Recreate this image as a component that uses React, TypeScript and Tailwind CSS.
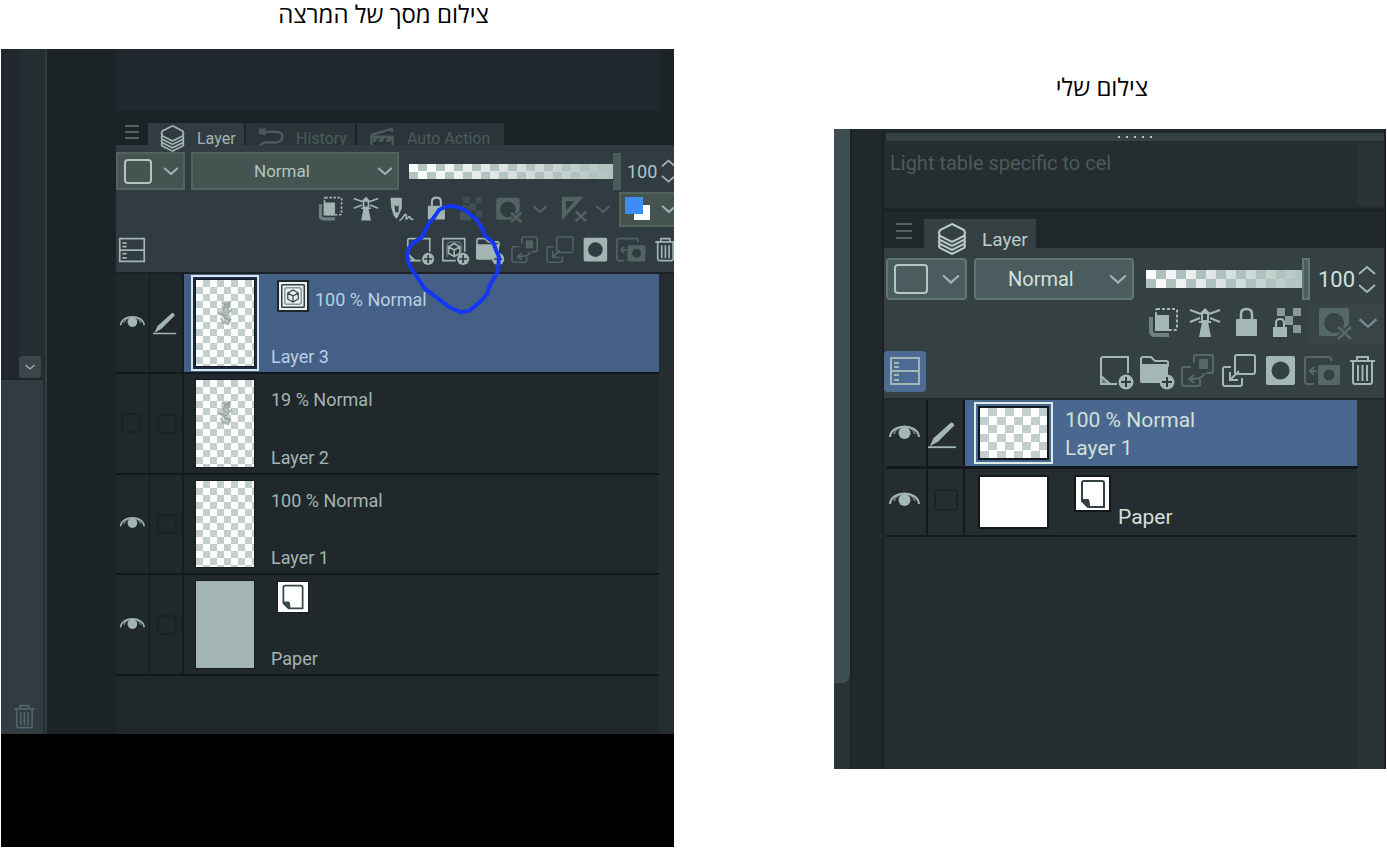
import React from "react";

type IconName =
  | "layers" | "reference" | "lighthouse" | "draft" | "lock" | "lockPixels" | "maskOff" | "rulerOff"
  | "newLayer" | "newCube" | "folder" | "transfer" | "merge" | "mask" | "applyMask" | "trash"
  | "eye" | "pen" | "history" | "clapper" | "list" | "paper" | "cube" | "chevron";

const line = { fill: "none", stroke: "currentColor", strokeWidth: 2 };

const plus = (
  <g>
    <circle cx="26" cy="27" r="7.5" fill="currentColor" />
    <path d="M21 27h10M26 22v10" stroke="#313b3e" strokeWidth="2" />
  </g>
);

const shapes: Record<IconName, React.ReactNode> = {
  layers: (
    <g {...line}>
      <path d="M16 1 L28 7 Q30 10 28 13 L16 19 L4 13 Q2 10 4 7 Z" />
      <path d="M4 12 Q2 15 4 17 L16 23 L28 17 Q30 15 28 12" />
      <path d="M4 17 Q2 19 4 21 L16 27 L28 21 Q30 19 28 17" />
      <path d="M4 21 Q2 23 4 25 L16 31 L28 25 Q30 23 28 21" />
    </g>
  ),
  reference: (
    <g>
      <path d="M3 10v14q0 4 4 4h14" fill="none" stroke="#6d8280" strokeWidth="4" />
      <rect x="7" y="8" width="14" height="16" fill="currentColor" />
      <rect x="8" y="2" width="21" height="21" rx="1" {...line} strokeDasharray="3 2" />
    </g>
  ),
  lighthouse: (
    <g>
      <path d="M1 3l11 4M31 3L20 7M1 15l10-4M31 15l-10-4" {...line} />
      <path d="M16 1l6 6H10zM13 15h6l3 15H10z" fill="currentColor" />
      <path d="M13 6v8h6V6M10 15h12" {...line} />
    </g>
  ),
  draft: (
    <g>
      <path d="M3 2h14v13l-5 11-2 2-3-4-3-10z" fill="currentColor" />
      <path d="M8 10q3 6 5 0v10H9z" fill="#313b42" />
      <path d="M14 30c4 0 6-9 8-7s-1 6 1 5 3-4 4-2 2 4 4 2" {...line} />
    </g>
  ),
  lock: (
    <g>
      <rect x="6" y="12" width="21" height="17" rx="1" fill="currentColor" />
      <path d="M11 12V7q0-5 5.500-5T22 7v5" {...line} strokeWidth="2.500" />
    </g>
  ),
  lockPixels: (
    <g>
      <g fill="currentColor" opacity="0.75">
        <path d="M6 1h8v8H6zM22 1h8v8h-8zM14 9h8v9h-8zM22 18h8v8h-8z" />
      </g>
      <rect x="2" y="20" width="14" height="10" fill="currentColor" />
      <path d="M5 20v-4q0-4 4-4t4 4v4" {...line} />
    </g>
  ),
  maskOff: (
    <g>
      <path fillRule="evenodd" d="M1 1h26q2 0 2 2v26H1q-2 0-2-2V3q0-2 2-2zM14 6a10 10 0 1 0 .1 20a10 10 0 1 0-.1-20z" fill="currentColor" />
      <path d="M18 20l13 12M31 20L18 32" stroke="#384446" strokeWidth="6" />
      <path d="M18 20l13 12M31 20L18 32" {...line} strokeWidth="3" />
    </g>
  ),
  rulerOff: (
    <g>
      <path fillRule="evenodd" d="M1 1h27L1 30zM6 6v12L17 6z" fill="currentColor" />
      <path d="M18 19l13 12M31 19L18 31" {...line} strokeWidth="3" />
    </g>
  ),
  newLayer: (
    <g>
      <path d="M28 18V2H3Q1 2 1 4v17l9 8h7M1 21v8h9" {...line} />
      <path d="M1 20l10 9H1z" fill="currentColor" opacity="0.5" />
      {plus}
    </g>
  ),
  newCube: (
    <g>
      <path d="M28 18V2H1v27h16" {...line} />
      <path d="M8 12l7-4 7 4v8l-7 4-7-4zM8 12l7 4 7-4M15 16v8" {...line} />
      <path d="M6 25V12q0-6 6-6h6q6 0 6 6v6" {...line} opacity="0.4" />
      {plus}
    </g>
  ),
  folder: (
    <g>
      <path d="M0 26V4q0-2 2-2h8l4 4h11q2 0 2 2v4" {...line} />
      <path d="M-1 9h28v14l-8 5H1q-2 0-2-2z" fill="currentColor" />
      {plus}
    </g>
  ),
  transfer: (
    <g {...line}>
      <path d="M12 8V2q0-2 2-2h15q2 0 2 2v14q0 2-2 2h-5" />
      <path d="M9 12H2q-2 0-2 2v15q0 2 2 2h14q2 0 2-2v-5" />
      <rect x="18" y="5" width="7" height="8" fill="currentColor" />
      <path d="M22 18q0 6-14 6M12 20l-5 4 5 4" />
    </g>
  ),
  merge: (
    <g {...line}>
      <rect x="12" y="0" width="20" height="19" rx="2" />
      <path d="M8 12H2q-2 0-2 2v15q0 2 2 2h15q2 0 2-2v-6" />
      <path d="M16 16L7 25M7 17v8h8" />
    </g>
  ),
  mask: (
    <path fillRule="evenodd" d="M4 1h25q2 0 2 2v25q0 2-2 2H4q-2 0-2-2V3q0-2 2-2zM16.500 6.500a9 9 0 1 0 .1 18a9 9 0 1 0-.1-18z" fill="currentColor" />
  ),
  applyMask: (
    <g>
      <path d="M26 6V4q0-2-2-2H2Q0 2 0 4v23q0 2 2 2h7" {...line} />
      <path d="M12 16H5M9 12l-4 4 4 4" {...line} />
      <path fillRule="evenodd" d="M15 10h18q2 0 2 2v16q0 2-2 2H15q-2 0-2-2V12q0-2 2-2zM24 14.500a5.500 5.500 0 1 0 .1 11a5.500 5.500 0 1 0-.1-11z" fill="currentColor" />
    </g>
  ),
  trash: (
    <g {...line}>
      <path d="M4 6h25M11 6V2h11v4M7 6v21q0 2 2 2h15q2 0 2-2V6" />
      <path d="M12 10v16M16.500 10v16M21 10v16" />
    </g>
  ),
  eye: (
    <g>
      <path d="M2 20C3 6 30 6 31 20" {...line} />
      <path d="M6 17C8 8 25 8 27 17" {...line} opacity="0.6" />
      <circle cx="16.500" cy="16" r="6" fill="currentColor" />
    </g>
  ),
  pen: (
    <g>
      <path d="M0 30h31" {...line} />
      <path d="M25 3q3-1 4 3L11 24l-9 5 4-9z" fill="currentColor" />
    </g>
  ),
  history: <path d="M5 6h18q7 0 7 6t-7 7H10q-7 0-8 7M3 1v8M9 2L3 6l6 3M2 26h24" {...line} strokeWidth="3" />,
  clapper: (
    <g>
      <path d="M2 10L29 2M3 32V12h26v20M28 1v5" {...line} strokeWidth="3" />
      <path d="M7 12l-4 6h5l4-6M15 12l-4 6h6l3-6M24 12l-4 6h6l3-6M12 24h8l-4 5z" fill="currentColor" />
    </g>
  ),
  list: (
    <g {...line}>
      <rect x="2" y="3" width="28" height="26" />
      <path d="M2 16h28M5 8h5M5 12h5M5 20h5M5 25h5" />
    </g>
  ),
  paper: (
    <g>
      <path d="M7 3h18q2 0 2 2v24H11l-6-6V5q0-2 2-2z" {...line} />
      <path d="M5 21h6q2 0 2 8h-2l-6-6z" fill="currentColor" />
    </g>
  ),
  cube: (
    <g {...line}>
      <rect x="1" y="1" width="30" height="30" rx="1" />
      <rect x="5" y="5" width="22" height="22" rx="3" opacity="0.5" />
      <path d="M9 12l7-4 7 4v8l-7 4-7-4zM9 12l7 4 7-4M16 16v8" strokeWidth="1.600" />
    </g>
  ),
  chevron: <path d="M7 12l9 8 9-8" {...line} strokeWidth="2.500" />,
};

function Icon({ name, className = "size-8" }: { name: IconName; className?: string }) {
  return (
    <svg viewBox="0 0 32 32" aria-hidden="true" className={`shrink-0 overflow-visible ${className}`}>
      {shapes[name]}
    </svg>
  );
}

function ToolButton({ name, label, className, icon }: { name: IconName; label: string; className: string; icon: string }) {
  return (
    <button type="button" aria-label={label} className={`flex shrink-0 items-center justify-center ${className}`}>
      <Icon name={name} className={icon} />
    </button>
  );
}

function MenuLines({ className }: { className: string }) {
  return (
    <button type="button" aria-label="Palette menu" className={`flex shrink-0 flex-col ${className}`}>
      <span className="h-0.5 w-full bg-[#526361]" />
      <span className="h-0.5 w-full bg-[#526361]" />
      <span className="h-0.5 w-full bg-[#526361]" />
    </button>
  );
}

function Stepper({ className }: { className: string }) {
  return (
    <div className={`flex shrink-0 flex-col justify-between text-[#a3b5b2] ${className}`}>
      <button type="button" aria-label="Increase opacity">
        <svg viewBox="0 0 18 10" className="w-full"><path d="M1 9l8-7 8 7" {...line} /></svg>
      </button>
      <button type="button" aria-label="Decrease opacity">
        <svg viewBox="0 0 18 10" className="w-full"><path d="M1 1l8 7 8-7" {...line} /></svg>
      </button>
    </div>
  );
}

type Row = { name: string; mode?: string; kind: "cube" | "plain" | "paper"; visible: boolean; active?: boolean; sketch?: boolean };

const leftRows: Row[] = [
  { name: "Layer 3", mode: "100 % Normal", kind: "cube", visible: true, active: true, sketch: true },
  { name: "Layer 2", mode: "19 % Normal", kind: "plain", visible: false, sketch: true },
  { name: "Layer 1", mode: "100 % Normal", kind: "plain", visible: true },
  { name: "Paper", kind: "paper", visible: true },
];

function EmptyBox({ className }: { className: string }) {
  return <span className={`rounded border-2 border-[#1b2225] ${className}`} />;
}

function LeftRow({ row }: { row: Row }) {
  return (
    <li className="flex h-[100px] border-b-2 border-[#12181b] text-[#a3b5b2] even:h-[101px]">
      <button type="button" aria-label={`Show ${row.name}`} className="flex w-[34px] shrink-0 items-center border-r border-[#151b1e] pb-0.5 pl-[3px]">
        {row.visible ? <Icon name="eye" className="size-[26px]" /> : <EmptyBox className="ml-0.5 size-5" />}
      </button>
      <button type="button" aria-label={`Edit ${row.name}`} className="flex w-[34px] shrink-0 items-center border-r-2 border-[#151b1e] pl-[3px]">
        {row.active ? <Icon name="pen" className="size-6" /> : <EmptyBox className="ml-1 size-5" />}
      </button>
      <div className={`flex min-w-0 flex-1 gap-3 pl-[7px] ${row.active ? "bg-[#456086] text-[#b9cfe2]" : ""}`}>
        <div className={`my-px flex w-[68px] shrink-0 border-2 p-0.5 ${row.active ? "border-[#dce6ee] bg-[#1d2a47]" : "border-transparent"}`}>
          <div
            className={`flex flex-1 justify-center border border-[#151b1e] ${
              row.kind === "paper"
                ? "bg-[#a3b5b2]"
                : "bg-[conic-gradient(#c2cfca_25%,white_0_50%,#c2cfca_0_75%,white_0)] bg-[length:14px_14px]"
            }`}
          >
            {row.sketch && (
              <svg viewBox="0 0 14 26" aria-hidden="true" className="mt-5 h-[26px] w-3.5 text-[#8a9a97] opacity-70">
                <path d="M4 2l3 3 4-2-1 6-5-2 2 5 5-1-3 4-6-1 4 4 5 2-2 4-5-2-2-4" fill="none" stroke="currentColor" strokeWidth="2.500" />
              </svg>
            )}
          </div>
        </div>
        <div className="flex flex-1 flex-col justify-between pt-1.5 pb-[3px] text-[18px] leading-6">
          <div className={row.kind === "plain" ? "pt-2" : "flex items-end gap-1.5 pl-1.5"}>
            {row.kind === "cube" && (
              <span className="flex size-8 items-center justify-center border-2 border-[#1e282c] bg-[#e6efec] text-[#334144]">
                <Icon name="cube" className="size-6" />
              </span>
            )}
            {row.kind === "paper" && (
              <span className="flex size-8 items-center justify-center border border-[#151b1e] bg-white text-[#39484a]">
                <Icon name="paper" className="size-7" />
              </span>
            )}
            {row.mode && <span>{row.mode}</span>}
          </div>
          <span>{row.name}</span>
        </div>
      </div>
    </li>
  );
}

function LecturerPanel() {
  const dim = "text-[#526361]";
  return (
    <div className="relative flex flex-col overflow-hidden bg-black pb-[113px]">
      <div className="flex bg-[#1c2327]">
        <div className="flex w-[46px] shrink-0 flex-col border-r-2 border-[#35433f]/80 bg-[linear-gradient(90deg,#20272f_0_16px,#242e32_20px)] pr-0.5">
          <div className="flex h-[331px] items-end justify-end border-b-2 border-[#1b2427] pr-0.5">
            <button type="button" aria-label="Expand list" className="flex size-[22px] items-center justify-center rounded-sm bg-[#3a474a] text-[#a3b5b2]">
              <Icon name="chevron" className="size-4" />
            </button>
          </div>
          <div className="flex flex-1 items-end justify-end bg-[#313b42] pr-1.5 pb-1">
            <ToolButton name="trash" label="Delete item" className="text-[#53656a]" icon="size-[26px]" />
          </div>
        </div>
        <div className="w-[69px] shrink-0" />
        <div className="flex min-w-0 flex-1 flex-col">
          <div className="mr-3.5 h-[62px] bg-[#20272f]" />
          <div className="flex h-[34px] items-end bg-[#1b2225] pt-3">
            <MenuLines className="mb-1 w-8 gap-1 self-center px-[9px]" />
            <div role="tablist" className="flex h-full gap-0.5">
              <button type="button" role="tab" aria-selected="true" className="relative z-10 flex w-24 items-start gap-[11px] bg-[#313b42] pl-[11px] pt-0.5 text-[16px] leading-7 text-[#a3b5b2]">
                <Icon name="layers" className="size-[27px]" />
                Layer
              </button>
              <button type="button" role="tab" aria-selected="false" className="flex w-[109px] items-start gap-3 overflow-hidden bg-[#2b3539] pl-3 pt-0.5 text-[16px] leading-7 text-[#4b5b5b]">
                <Icon name="history" className="mt-0.5 size-[26px]" />
                History
              </button>
              <button type="button" role="tab" aria-selected="false" className="flex w-[147px] items-start gap-3 overflow-hidden bg-[#2b3539] pl-3 pt-0.5 text-[16px] leading-7 whitespace-nowrap text-[#4b5b5b]">
                <Icon name="clapper" className="mt-0.5 size-[26px]" />
                Auto Action
              </button>
            </div>
          </div>
          <div className="bg-[#313b42] pt-[7px]">
            <div className="flex h-[38px] items-center">
              <button type="button" aria-label="Palette color" className="flex h-[38px] w-[69px] shrink-0 items-center justify-between border-2 border-[#52635f] bg-[#455451] pr-0 pl-1.5 text-[#a3b5b2]">
                <span className="h-[25px] w-7 rounded-sm border-2 border-[#b3c3c0]" />
                <Icon name="chevron" className="size-6" />
              </button>
              <div className="relative ml-1.5 w-52 shrink-0">
                <select aria-label="Blending mode" className="h-[38px] w-full appearance-none border-2 border-[#52635f] bg-[#455451] pt-0.5 pl-[61px] text-[17px] text-[#b3c5c2]">
                  <option>Normal</option>
                </select>
                <span className="pointer-events-none absolute top-[7px] right-0.5 text-[#a3b5b2]"><Icon name="chevron" className="size-6" /></span>
              </div>
              <input
                type="range"
                aria-label="Opacity"
                defaultValue={100}
                className="ml-2.5 h-[38px] min-w-0 flex-1 appearance-none bg-transparent [&::-webkit-slider-runnable-track]:h-[15px] [&::-webkit-slider-runnable-track]:[background:linear-gradient(90deg,transparent,#b0c0be),conic-gradient(#b5c5c2_25%,white_0_50%,#b5c5c2_0_75%,white_0)_0_0/18px_15px] [&::-webkit-slider-thumb]:-mt-[11px] [&::-webkit-slider-thumb]:h-[37px] [&::-webkit-slider-thumb]:w-2 [&::-webkit-slider-thumb]:appearance-none [&::-webkit-slider-thumb]:bg-[#4b5c5a]"
              />
              <input aria-label="Opacity value" defaultValue="100" className="ml-1.5 w-[34px] shrink-0 text-[18px] text-[#b3c5c2]" />
              <Stepper className="-mr-0.5 h-6 w-[15px]" />
            </div>
            <div className="-mr-1.5 flex h-[38px] items-center justify-end text-[#a3b5b2]">
              <ToolButton name="reference" label="Reference layer" className="w-[35px]" icon="size-[26px]" />
              <ToolButton name="lighthouse" label="Draft layer" className="w-[35px]" icon="size-[26px]" />
              <ToolButton name="draft" label="Clip to layer below" className="w-[35px]" icon="size-[26px]" />
              <ToolButton name="lock" label="Lock layer" className="w-[35px]" icon="size-[26px]" />
              <ToolButton name="lockPixels" label="Lock transparent pixels" className="w-[35px] text-[#46555a]" icon="size-[26px]" />
              <div className={`ml-1 flex w-[65px] shrink-0 items-center ${dim}`}>
                <ToolButton name="maskOff" label="Enable mask" className="w-[35px]" icon="size-[25px]" />
                <ToolButton name="chevron" label="Mask options" className="w-[26px]" icon="size-6" />
              </div>
              <div className={`flex w-[62px] shrink-0 items-center ${dim}`}>
                <ToolButton name="rulerOff" label="Ruler range" className="w-[34px]" icon="size-[26px]" />
                <ToolButton name="chevron" label="Ruler options" className="w-6" icon="size-6" />
              </div>
              <button type="button" aria-label="Layer color" className="flex h-[35px] w-[61px] shrink-0 items-center gap-1.5 border-2 border-[#52635f] bg-[#455451] pl-1 text-[#a3b5b2]">
                <svg viewBox="0 0 26 26" className="size-[26px] shrink-0">
                  <rect x="9" y="9" width="16" height="15" fill="white" />
                  <rect x="0" y="1" width="18" height="17" fill="#3d8df5" />
                </svg>
                <Icon name="chevron" className="size-6" />
              </button>
            </div>
            <div className="-mr-2 flex h-[44px] items-center text-[#a3b5b2]">
              <ToolButton name="list" label="Two pane view" className="mr-auto w-8" icon="size-7" />
              <ToolButton name="newLayer" label="New raster layer" className="w-[35px]" icon="size-[26px]" />
              <ToolButton name="newCube" label="New vector layer" className="w-[35px]" icon="size-[26px]" />
              <ToolButton name="folder" label="New folder" className="w-[35px]" icon="size-[26px]" />
              <ToolButton name="transfer" label="Transfer to lower layer" className={`w-[35px] ${dim}`} icon="size-[26px]" />
              <ToolButton name="merge" label="Combine to lower layer" className={`w-[35px] ${dim}`} icon="size-[26px]" />
              <ToolButton name="mask" label="Create mask" className="w-[35px]" icon="size-[26px]" />
              <ToolButton name="applyMask" label="Apply mask" className={`w-[35px] ${dim}`} icon="size-[26px]" />
              <ToolButton name="trash" label="Delete layer" className="w-[35px]" icon="size-[26px]" />
            </div>
          </div>
          <div className="border-t-2 border-[#1b2225] bg-[#242e30] pr-[15px]">
            <ul className="bg-[#20282c] pb-[58px]">
              {leftRows.map((row) => <LeftRow key={row.name} row={row} />)}
            </ul>
          </div>
        </div>
      </div>
      <svg viewBox="400 200 110 120" aria-hidden="true" className="pointer-events-none absolute top-[151px] right-[164px] z-20 h-[120px] w-[110px]">
        <path
          d="M450 206 L458 207 L465 210 L477 220 L483 230 L485 236 L493 242 L496 250 L499 257 L498 271 L493 280 L490 285 L487 294 L480 302 L469 311 L460 312 L449 307 L440 300 L432 294 L425 289 L417 277 L409 265 L407 255 L409 248 L413 243 L422 237 L428 225 L435 216 L439 210 L445 207 Z"
          fill="none"
          stroke="#1437f5"
          strokeWidth="4"
          strokeLinejoin="round"
        />
      </svg>
    </div>
  );
}

function MyPanel() {
  const dim = "text-[#566866]";
  return (
    <div className="flex overflow-hidden bg-[#20282b]">
      <div className="w-[18px] shrink-0 border-r-2 border-[#1b2225] bg-[#2a3336]">
        <div className="h-[554px] rounded-br-lg bg-[#3f4e52]" />
      </div>
      <div className="w-8 shrink-0 border-r-2 border-[#1b2225]" />
      <div className="flex min-w-0 flex-1 flex-col border-r-2 border-[#1b2225]">
        <div className="mt-1 ml-0.5 flex h-2 items-center justify-center gap-1.5 bg-[#344042]">
          {[0, 1, 2, 3, 4].map((dot) => <span key={dot} className="size-0.5 bg-[#b8c8c5]" />)}
        </div>
        <div className="flex h-[67px] bg-[#262d30]">
          <p className="flex-1 pt-2 pl-1.5 text-[20px] leading-7 text-[#4a5b5b]">Light table specific to cel</p>
          <span className="my-[3px] w-[27px] bg-[#2a3335]" />
        </div>
        <div className="flex h-10 border-t-4 border-[#1b2225]">
          <MenuLines className="mt-0.5 w-10 gap-[5px] self-center px-3" />
          <div role="tablist" className="flex pt-[7px]">
            <button type="button" role="tab" aria-selected="true" className="relative z-10 flex w-28 items-start gap-3.5 bg-[#344042] pl-3 pt-1 text-[19px] leading-[34px] text-[#bccbc8]">
              <Icon name="layers" />
              Layer
            </button>
          </div>
        </div>
        <div className="bg-[#344042] pt-2.5">
          <div className="flex h-[42px] items-center pr-2 pl-0.5">
            <button type="button" aria-label="Palette color" className="flex h-[42px] w-[81px] shrink-0 items-center justify-between rounded-sm border-2 border-[#627674] bg-[#4b5c5e] pr-0 pl-1.5 text-[#a3b5b2]">
              <span className="h-[30px] w-[34px] rounded border-2 border-[#b3c7c3]" />
              <Icon name="chevron" className="size-7" />
            </button>
            <div className="relative ml-[7px] w-40 shrink-0">
              <select aria-label="Blending mode" className="h-[42px] w-full appearance-none rounded-sm border-2 border-[#627674] bg-[#4b5c5e] pl-8 text-[20px] text-[#d0e0dc]">
                <option>Normal</option>
              </select>
              <span className="pointer-events-none absolute top-[7px] right-0.5 text-[#a3b5b2]"><Icon name="chevron" className="size-7" /></span>
            </div>
            <input
              type="range"
              aria-label="Opacity"
              defaultValue={100}
              className="ml-3 h-[42px] min-w-0 flex-1 appearance-none bg-transparent [&::-webkit-slider-runnable-track]:h-[18px] [&::-webkit-slider-runnable-track]:[background:linear-gradient(90deg,transparent,#b0c4c0),conic-gradient(#aebfbc_25%,white_0_50%,#aebfbc_0_75%,white_0)_0_0/20px_18px] [&::-webkit-slider-thumb]:-mt-3 [&::-webkit-slider-thumb]:h-[42px] [&::-webkit-slider-thumb]:w-2 [&::-webkit-slider-thumb]:appearance-none [&::-webkit-slider-thumb]:border-2 [&::-webkit-slider-thumb]:border-solid [&::-webkit-slider-thumb]:border-[#627674] [&::-webkit-slider-thumb]:bg-[#4b5c5e]"
            />
            <input aria-label="Opacity value" defaultValue="100" className="ml-2 w-10 shrink-0 text-[22px] text-[#d0e0dc]" />
            <Stepper className="h-[29px] w-[18px]" />
          </div>
          <div className="mt-0.5 flex h-[42px] items-center justify-end text-[#a3b8b4]">
            <ToolButton name="reference" label="Reference layer" className="w-[41px] pr-1" icon="size-8" />
            <ToolButton name="lighthouse" label="Draft layer" className="w-[41px] pr-1" icon="size-8" />
            <ToolButton name="lock" label="Lock layer" className="w-[41px] pr-1" icon="size-8" />
            <ToolButton name="lockPixels" label="Lock transparent pixels" className="w-[41px] pr-1" icon="size-8" />
            <div className={`flex h-[41px] w-[75px] shrink-0 items-center rounded-sm bg-[#384446] ${dim}`}>
              <ToolButton name="maskOff" label="Enable mask" className="w-[42px] pl-3" icon="size-8" />
              <ToolButton name="chevron" label="Mask options" className="w-[33px] text-[#74898a]" icon="size-[30px]" />
            </div>
          </div>
          <div className="flex h-[54px] items-center text-[#a3b8b4]">
            <ToolButton name="list" label="Two pane view" className="mr-auto h-[41px] w-[42px] rounded-sm bg-[#4d6c94]" icon="size-8" />
            <ToolButton name="newLayer" label="New raster layer" className="w-[41px] pr-1" icon="size-8" />
            <ToolButton name="folder" label="New folder" className="w-[41px] pr-1" icon="size-8" />
            <ToolButton name="transfer" label="Transfer to lower layer" className={`w-[41px] pr-1 ${dim}`} icon="size-8" />
            <ToolButton name="merge" label="Combine to lower layer" className="w-[41px] pr-1" icon="size-8" />
            <ToolButton name="mask" label="Create mask" className="w-[41px] pr-1" icon="size-8" />
            <ToolButton name="applyMask" label="Apply mask" className={`w-[41px] pr-1 ${dim}`} icon="size-8" />
            <ToolButton name="trash" label="Delete layer" className="w-[41px] pr-1" icon="size-8" />
          </div>
        </div>
        <div className="flex-1 border-t-2 border-[#20282b] bg-[#2a3335] pr-[27px]">
          <ul className="min-h-[369px] bg-[#262d30] pl-0.5 text-[21px] leading-7 text-[#d0e0dc]">
            <li className="flex h-[69px] border-b-[3px] border-[#12181b]">
              <button type="button" aria-label="Show Layer 1" className="flex w-[42px] shrink-0 items-center border-r-2 border-[#12181b] pl-0.5 text-[#a3b8b4]">
                <Icon name="eye" />
              </button>
              <button type="button" aria-label="Edit Layer 1" className="flex w-[37px] shrink-0 items-center border-r-2 border-[#12181b] pt-0.5 text-[#a3b8b4]">
                <Icon name="pen" className="size-[29px]" />
              </button>
              <div className="flex flex-1 items-center gap-3 bg-[#4a678f] pl-[9px]">
                <span className="flex h-[62px] w-[79px] shrink-0 border-2 border-[#dcebe6] p-0.5">
                  <span className="flex-1 border-2 border-[#12181b] bg-[conic-gradient(#c2cfcd_25%,white_0_50%,#c2cfcd_0_75%,white_0)] bg-[length:17px_17px]" />
                </span>
                <div className="flex flex-col pt-0.5">
                  <span>100 % Normal</span>
                  <span>Layer 1</span>
                </div>
              </div>
            </li>
            <li className="flex h-[68px] border-b-2 border-[#12181b]">
              <button type="button" aria-label="Show Paper" className="flex w-[42px] shrink-0 items-center border-r-2 border-[#12181b] pb-1 pl-0.5 text-[#a3b8b4]">
                <Icon name="eye" />
              </button>
              <button type="button" aria-label="Edit Paper" className="flex w-[37px] shrink-0 items-center border-r-2 border-[#12181b] pb-1 pl-1.5">
                <EmptyBox className="h-[22px] w-6" />
              </button>
              <div className="flex flex-1 items-start pt-1.5 pl-[13px]">
                <span className="h-[54px] w-[71px] shrink-0 border-2 border-[#12181b] bg-white" />
                <span className="ml-[25px] flex size-[37px] shrink-0 items-center justify-center border-2 border-[#12181b] bg-white text-[#344042]">
                  <Icon name="paper" />
                </span>
                <span className="ml-[7px] self-end pb-1">Paper</span>
              </div>
            </li>
          </ul>
        </div>
      </div>
    </div>
  );
}

export default function App() {
  return (
    <main className="grid min-h-screen grid-cols-[673fr_552fr] items-start gap-40 bg-white px-px font-[Roboto,'Liberation_Sans',sans-serif]">
      <figure className="min-w-0">
        <figcaption lang="he" dir="rtl" className="h-[49px] pl-[92px] text-center font-['Open_Sans','Noto_Sans',sans-serif] text-[24px] leading-7 text-black">
          צילום מסך של המרצה
        </figcaption>
        <LecturerPanel />
      </figure>
      <figure className="min-w-0 pt-[73px]">
        <figcaption lang="he" dir="rtl" className="h-14 pr-4 text-center font-['Open_Sans','Noto_Sans',sans-serif] text-[24px] leading-7 text-black">
          צילום שלי
        </figcaption>
        <MyPanel />
      </figure>
    </main>
  );
}
